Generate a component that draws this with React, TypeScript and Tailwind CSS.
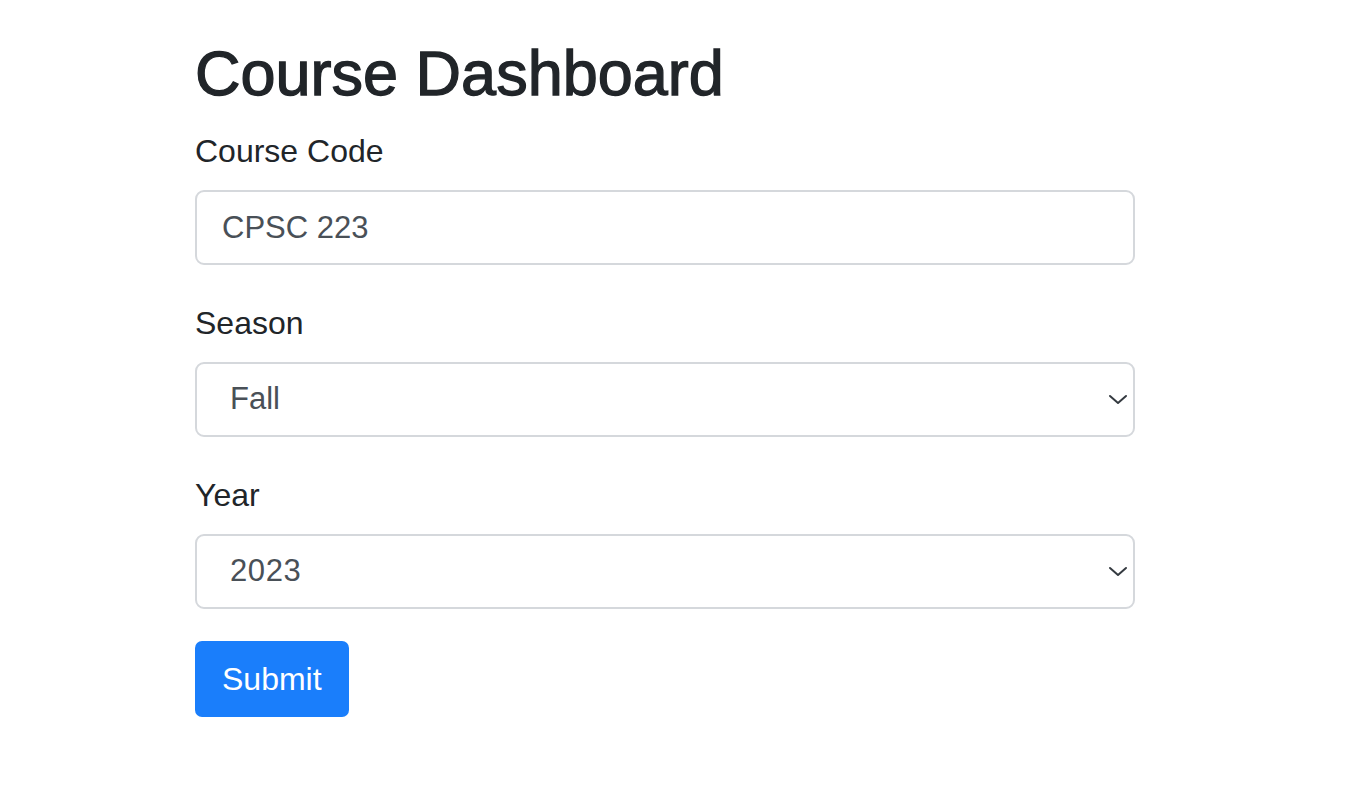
import { useState } from "react";

const font = "font-['Liberation_Sans',Arial,sans-serif]";

function Chevron() {
  return (
    <svg
      className="pointer-events-none absolute right-[7px] top-[32px]"
      width="20"
      height="11"
      viewBox="0 0 20 11"
      fill="none"
    >
      <path
        d="M2 2l8 7 8-7"
        stroke="#343a40"
        strokeWidth="2"
        strokeLinecap="round"
        strokeLinejoin="round"
      />
    </svg>
  );
}

export default function App() {
  const [code, setCode] = useState("CPSC 223");
  const [season, setSeason] = useState("Fall");
  const [year, setYear] = useState("2023");

  return (
    <div className={`min-h-screen bg-white ${font}`}>
      <form
        className="ml-[195px] w-[940px] pt-[35px]"
        onSubmit={(e) => e.preventDefault()}
      >
        <h1 className="text-[63px] leading-[76px] text-[#212529] [-webkit-text-stroke:1.3px_#212529]">
          Course Dashboard
        </h1>

        <label className="mt-[17px] block text-[32px] leading-[46px] text-[#212529]">
          Course Code
        </label>
        <input
          className="mt-[16px] block h-[75px] w-full rounded-[9px] border-2 border-[#d5d8dc] px-[25px] text-[31px] text-[#495057] outline-none"
          value={code}
          onChange={(e) => setCode(e.target.value)}
        />

        <label className="mt-[35px] block text-[32px] leading-[46px] text-[#212529]">
          Season
        </label>
        <div className="relative mt-[16px]">
          <select
            className="block h-[75px] w-full appearance-none rounded-[9px] border-2 border-[#d5d8dc] bg-white px-[33px] text-[31px] text-[#495057] outline-none"
            value={season}
            onChange={(e) => setSeason(e.target.value)}
          >
            <option>Fall</option>
            <option>Winter</option>
            <option>Spring</option>
            <option>Summer</option>
          </select>
          <Chevron />
        </div>

        <label className="mt-[35px] block text-[32px] leading-[46px] text-[#212529]">
          Year
        </label>
        <div className="relative mt-[16px]">
          <select
            className="block h-[75px] w-full appearance-none rounded-[9px] border-2 border-[#d5d8dc] bg-white px-[33px] text-[31px] tracking-[0.6px] text-[#495057] outline-none"
            value={year}
            onChange={(e) => setYear(e.target.value)}
          >
            <option>2021</option>
            <option>2022</option>
            <option>2023</option>
            <option>2024</option>
          </select>
          <Chevron />
        </div>

        <button
          type="submit"
          className="mt-[32px] h-[76px] rounded-[7px] bg-[#1a7efb] px-[27px] text-[32px] text-white"
        >
          Submit
        </button>
      </form>
    </div>
  );
}
